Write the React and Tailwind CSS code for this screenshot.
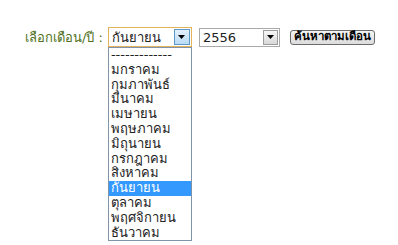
import React from 'react';

const months = [
  '-------------',
  'มกราคม',
  'กุมภาพันธ์',
  'มีนาคม',
  'เมษายน',
  'พฤษภาคม',
  'มิถุนายน',
  'กรกฎาคม',
  'สิงหาคม',
  'กันยายน',
  'ตุลาคม',
  'พฤศจิกายน',
  'ธันวาคม',
];

const Arrow = () => (
  <svg width="7" height="4" viewBox="0 0 7 4">
    <path d="M0 0h7L3.5 4z" fill="#000" />
  </svg>
);

export default function App() {
  return (
    <div className="w-[398px] h-[245px] bg-white overflow-hidden text-[13px] text-[#222]" style={{ fontFamily: 'Tahoma, "DejaVu Sans", "Noto Sans", sans-serif' }}>
      <div className="flex items-center pl-[25px] pt-[27px]">
        <span className="text-[#4f7120] mr-[5px] leading-none">เลือกเดือน/ปี :</span>

        {/* month select, open */}
        <div className="relative">
          <div className="flex items-center w-[84px] h-[20px] border border-[#e3b35a] bg-white">
            <span className="flex-1 pl-[3px] leading-none">กันยายน</span>
            <div className="flex items-center justify-center w-[16px] h-[16px] mr-[1px] border border-[#5e97c9] bg-gradient-to-b from-[#e3f1fc] to-[#b9dbf5]">
              <Arrow />
            </div>
          </div>
          <div className="absolute left-0 top-[20px] w-[84px] border border-[#8193a8] bg-white">
            {months.map((m, i) => (
              <div
                key={i}
                className={`h-[14.8px] pl-[2px] leading-[14.8px] whitespace-nowrap ${i === 9 ? 'bg-[#3399ff] text-white' : ''}`}
              >
                {m}
              </div>
            ))}
          </div>
        </div>

        {/* year select */}
        <div className="flex items-center w-[81px] h-[19px] ml-[7px] border border-[#a9a9a9] bg-white">
          <span className="flex-1 pl-[3px] leading-none">2556</span>
          <div className="flex items-center justify-center w-[15px] h-[15px] mr-[1px] border border-[#9c9c9c] bg-gradient-to-b from-[#f6f6f6] to-[#d8d8d8]">
            <Arrow />
          </div>
        </div>

        <button className="ml-[10px] h-[15px] px-[3px] border border-[#6b6b6b] rounded-[3px] bg-gradient-to-b from-[#f4f4f4] to-[#dcdcdc] text-black leading-none text-[11.5px] font-semibold">
          ค้นหาตามเดือน
        </button>
      </div>
    </div>
  );
}
